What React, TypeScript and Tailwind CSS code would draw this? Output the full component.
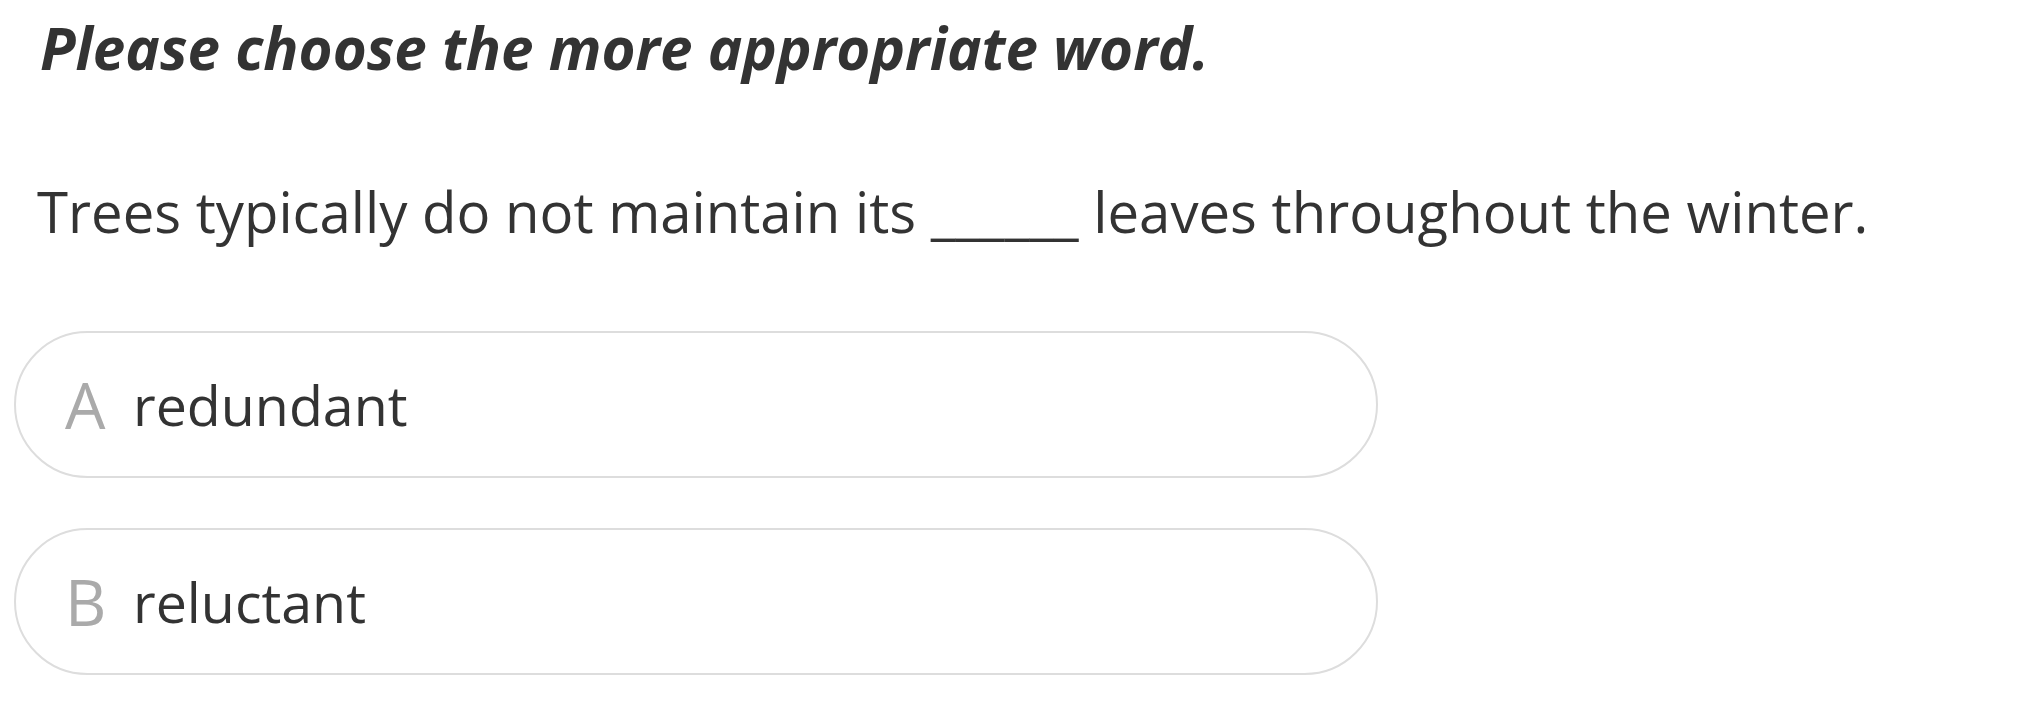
import React from "react";

const SENT = "Trees typically do not maintain its ______ leaves throughout the winter.";
const TITLE = "Please choose the more appropriate word.";

function Option({ letter, text }: { letter: string; text: string }) {
  return (
    <div className="flex h-[147px] w-[1364px] items-center rounded-full border-2 border-[#dddddd] bg-white pl-[49px]">
      <span className="w-[68px] text-[64px] leading-none text-[#aaaaaa]">{letter}</span>
      <span className="text-[55.5px] leading-none text-[#333333]">{text}</span>
    </div>
  );
}

export default function App() {
  return (
    <div className="min-h-[703px] bg-white pl-[14px] pt-[13px] font-['Open_Sans',sans-serif] text-[#333333]">
      <h1 className="pl-[26px] text-[58.3px] font-bold italic leading-[70px]">{TITLE}</h1>
      <p className="mt-[93px] pl-[23px] text-[56.3px] leading-[70px]">{SENT}</p>
      <div className="mt-[85px] flex flex-col gap-[50px]">
        <Option letter="A" text="redundant" />
        <Option letter="B" text="reluctant" />
      </div>
    </div>
  );
}
